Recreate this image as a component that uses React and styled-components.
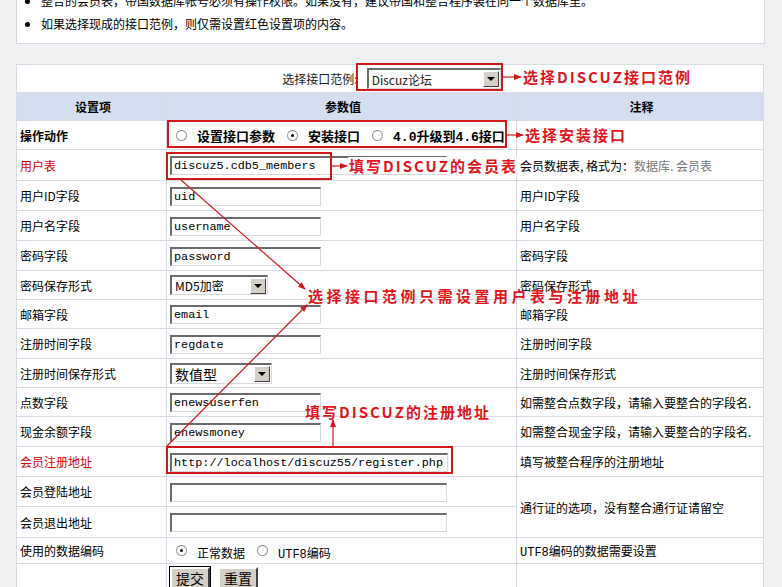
import React from 'react'
import styled, { createGlobalStyle } from 'styled-components'

const GlobalStyle = createGlobalStyle`
  body {
    margin: 0;
    background: #f0f1f3;
    font-family: "Noto Sans CJK SC", "Noto Sans", sans-serif;
    font-size: 12px;
    color: #000;
  }
`

const Page = styled.div`
  position: relative;
  display: flow-root;
  width: 782px;
  height: 587px;
  overflow: hidden;
  padding: 0 19px 0 16px;
  box-sizing: border-box;
`

const TipPanel = styled.div`
  margin-top: -14px;
  background: #fff;
  border: 1px solid #d3d8e3;
  padding: 2px 0 8px 0;
  width: 749px;
  box-sizing: border-box;
`

const TipList = styled.ul`
  margin: 0;
  padding: 0 0 0 24px;
  list-style: disc;
  li {
    line-height: 23px;
    padding-left: 0;
  }
`

const Table = styled.table`
  margin-top: 20px;
  width: 747px;
  border-collapse: collapse;
  background: #fff;
  table-layout: fixed;
  td, th {
    border: 1px solid #d6dbe6;
    padding: 0 0 0 3px;
    vertical-align: middle;
    white-space: nowrap;
  }
`

const Row = styled.tr`
  height: ${p => p.h}px;
`

const ExampleCell = styled.td`
  text-align: center;
  color: #222;
`

const HeadCell = styled.th`
  background: #d4deef;
  font-weight: bold;
  text-align: center;
  font-size: 12px;
`

const LabelCell = styled.td`
  color: ${p => (p.red ? '#d40000' : '#000')};
  font-weight: ${p => (p.bold ? 'bold' : 'normal')};
`

const ValueCell = styled.td`
  padding-left: 3px;
`

const NoteCell = styled.td`
  padding-left: 3px;
`

const Gray = styled.span`
  color: #777;
`

const Field = styled.input`
  width: ${p => p.w}px;
  height: 19px;
  box-sizing: border-box;
  margin: 0;
  padding: 0 1px 0 2px;
  vertical-align: middle;
  font-family: "Liberation Mono", monospace;
  font-size: 11.8px;
  color: #000;
  background: #fff;
  border-top: 2px solid #6c6c6c;
  border-left: 2px solid #6c6c6c;
  border-bottom: 1px solid #d9d9d9;
  border-right: 1px solid #d9d9d9;
  outline: none;
`

const Combo = styled.div`
  display: inline-flex;
  align-items: center;
  justify-content: space-between;
  width: ${p => p.w}px;
  height: ${p => p.h || 20}px;
  box-sizing: border-box;
  vertical-align: middle;
  background: #fff;
  border-top: 2px solid #6c6c6c;
  border-left: 2px solid #6c6c6c;
  border-bottom: 1px solid #d9d9d9;
  border-right: 1px solid #d9d9d9;
  padding-left: 3px;
  font-size: ${p => p.fs || 12}px;
`

const ComboButton = styled.span`
  display: flex;
  align-items: center;
  justify-content: center;
  width: 16px;
  height: 16px;
  margin-right: 1px;
  box-sizing: border-box;
  background: #d4d0c8;
  border-top: 1px solid #fff;
  border-left: 1px solid #fff;
  border-bottom: 1px solid #404040;
  border-right: 1px solid #404040;
`

const Triangle = styled.span`
  width: 0;
  height: 0;
  border-left: 4px solid transparent;
  border-right: 4px solid transparent;
  border-top: 4px solid #000;
`

const ExampleLabel = styled.span`
  vertical-align: middle;
  margin-right: 9px;
`

const RadioGroup = styled.div`
  display: flex;
  align-items: center;
  padding-left: 6px;
  white-space: nowrap;
  font-weight: ${p => (p.bold ? 'bold' : 'normal')};
  font-size: ${p => (p.bold ? 13 : 12)}px;
`

const Radio = styled.input`
  appearance: none;
  width: 11px;
  height: 11px;
  margin: 0 10px 0 0;
  border-radius: 50%;
  border: 1px solid #9a9a9a;
  border-top-color: #7a7a7a;
  background: #fff;
  position: relative;
  flex: none;
  &:checked::after {
    content: '';
    position: absolute;
    left: 3px;
    top: 3px;
    width: 3px;
    height: 3px;
    border-radius: 50%;
    background: #111;
  }
`

const RadioText = styled.span`
  flex: none;
  margin-right: 12px;
  padding-top: ${p => (p.low ? 4 : 0)}px;
`

const Mono = styled.span`
  font-family: "Liberation Mono", monospace;
`

const ClassicButton = styled.button`
  height: 23px;
  margin: 3px 8px 0 0;
  padding: 0 4px;
  font-family: "Noto Sans CJK SC", sans-serif;
  font-size: 14px;
  line-height: 17px;
  background: #d4d0c8;
  color: #000;
  border-top: 2px solid #fff;
  border-left: 2px solid #fff;
  border-bottom: 2px solid #404040;
  border-right: 2px solid #404040;
  outline: ${p => (p.primary ? '1px solid #000' : 'none')};
  vertical-align: top;
`

const Overlay = styled.svg`
  position: absolute;
  left: 0;
  top: 0;
  pointer-events: none;
`

const Note = styled.span`
  position: absolute;
  left: ${p => p.x}px;
  top: ${p => p.y}px;
  color: #e3151b;
  font-weight: bold;
  font-size: 15px;
  line-height: 17px;
  letter-spacing: ${p => p.ls || 2}px;
  white-space: nowrap;
  background: ${p => (p.cover ? '#fff' : 'transparent')};
  padding-left: ${p => (p.cover ? 1 : 0)}px;
`

const fields = [
  { label: '用户ID字段', value: 'uid', note: '用户ID字段' },
  { label: '用户名字段', value: 'username', note: '用户名字段' },
  { label: '密码字段', value: 'password', note: '密码字段' },
]

function Select({ w, text, fs, h }) {
  return (
    <Combo w={w} fs={fs} h={h}>
      <span>{text}</span>
      <ComboButton>
        <Triangle />
      </ComboButton>
    </Combo>
  )
}

function Arrows() {
  const red = '#d3181c'
  return (
    <Overlay width="782" height="587">
      <defs>
        <marker id="head" markerWidth="8" markerHeight="6" refX="7" refY="3" orient="auto" markerUnits="userSpaceOnUse">
          <path d="M0,0 L8,3 L0,6 Z" fill={red} />
        </marker>
      </defs>
      <g fill="none" stroke={red} strokeWidth="2">
        <rect x="357" y="64" width="145" height="26" />
        <rect x="168" y="121" width="338" height="26" />
        <rect x="167" y="153" width="164" height="26" />
        <rect x="167" y="447" width="285" height="26" />
      </g>
      <g stroke={red} strokeWidth="1.2" markerEnd="url(#head)">
        <line x1="503" y1="77" x2="521" y2="77" />
        <line x1="507" y1="135" x2="523" y2="135" />
        <line x1="332" y1="166" x2="347" y2="166" />
        <line x1="181" y1="180" x2="305" y2="289" />
        <line x1="167" y1="446" x2="307" y2="305" />
        <line x1="333" y1="446" x2="333" y2="420" />
      </g>
    </Overlay>
  )
}

export default function App() {
  return (
    <Page>
      <GlobalStyle />
      <TipPanel>
        <TipList>
          <li>整合的会员表，帝国数据库帐号必须有操作权限。如果没有，建议帝国和整合程序装在同一个数据库里。</li>
          <li>如果选择现成的接口范例，则仅需设置红色设置项的内容。</li>
        </TipList>
      </TipPanel>

      <Table>
        <colgroup>
          <col style={{ width: 150 }} />
          <col style={{ width: 350 }} />
          <col style={{ width: 247 }} />
        </colgroup>
        <tbody>
          <Row h={28}>
            <ExampleCell colSpan={3}>
              <ExampleLabel>选择接口范例:</ExampleLabel>
              <Select w={134} h={21} text="Discuz论坛" />
            </ExampleCell>
          </Row>
          <Row h={28}>
            <HeadCell>设置项</HeadCell>
            <HeadCell>参数值</HeadCell>
            <HeadCell>注释</HeadCell>
          </Row>
          <Row h={29}>
            <LabelCell bold>操作动作</LabelCell>
            <ValueCell>
              <RadioGroup bold>
                <Radio type="radio" name="act" />
                <RadioText>设置接口参数</RadioText>
                <Radio type="radio" name="act" defaultChecked />
                <RadioText>安装接口</RadioText>
                <Radio type="radio" name="act" />
                <RadioText><Mono>4.0</Mono>升级到<Mono>4.6</Mono>接口</RadioText>
              </RadioGroup>
            </ValueCell>
            <NoteCell />
          </Row>
          <Row h={31}>
            <LabelCell red>用户表</LabelCell>
            <ValueCell><Field w={277} defaultValue="discuz5.cdb5_members" /></ValueCell>
            <NoteCell>会员数据表, 格式为：<Gray>数据库. 会员表</Gray></NoteCell>
          </Row>
          {fields.map(f => (
            <Row h={30} key={f.label}>
              <LabelCell>{f.label}</LabelCell>
              <ValueCell><Field w={151} defaultValue={f.value} /></ValueCell>
              <NoteCell>{f.note}</NoteCell>
            </Row>
          ))}
          <Row h={29}>
            <LabelCell>密码保存形式</LabelCell>
            <ValueCell><Select w={98} text="MD5加密" /></ValueCell>
            <NoteCell>密码保存形式</NoteCell>
          </Row>
          <Row h={29}>
            <LabelCell>邮箱字段</LabelCell>
            <ValueCell><Field w={151} defaultValue="email" /></ValueCell>
            <NoteCell>邮箱字段</NoteCell>
          </Row>
          <Row h={30}>
            <LabelCell>注册时间字段</LabelCell>
            <ValueCell><Field w={151} defaultValue="regdate" /></ValueCell>
            <NoteCell>注册时间字段</NoteCell>
          </Row>
          <Row h={29}>
            <LabelCell>注册时间保存形式</LabelCell>
            <ValueCell><Select w={102} h={21} fs={14} text="数值型" /></ValueCell>
            <NoteCell>注册时间保存形式</NoteCell>
          </Row>
          <Row h={29}>
            <LabelCell>点数字段</LabelCell>
            <ValueCell><Field w={151} defaultValue="enewsuserfen" /></ValueCell>
            <NoteCell>如需整合点数字段，请输入要整合的字段名.</NoteCell>
          </Row>
          <Row h={30}>
            <LabelCell>现金余额字段</LabelCell>
            <ValueCell><Field w={151} defaultValue="enewsmoney" /></ValueCell>
            <NoteCell>如需整合现金字段，请输入要整合的字段名.</NoteCell>
          </Row>
          <Row h={30}>
            <LabelCell red>会员注册地址</LabelCell>
            <ValueCell><Field w={278} defaultValue="http://localhost/discuz55/register.php" /></ValueCell>
            <NoteCell>填写被整合程序的注册地址</NoteCell>
          </Row>
          <Row h={30}>
            <LabelCell>会员登陆地址</LabelCell>
            <ValueCell><Field w={277} defaultValue="" /></ValueCell>
            <NoteCell rowSpan={2}>通行证的选项，没有整合通行证请留空</NoteCell>
          </Row>
          <Row h={31}>
            <LabelCell>会员退出地址</LabelCell>
            <ValueCell><Field w={277} defaultValue="" /></ValueCell>
          </Row>
          <Row h={26}>
            <LabelCell>使用的数据编码</LabelCell>
            <ValueCell>
              <RadioGroup>
                <Radio type="radio" name="enc" defaultChecked />
                <RadioText low>正常数据</RadioText>
                <Radio type="radio" name="enc" />
                <RadioText low><Mono>UTF8</Mono>编码</RadioText>
              </RadioGroup>
            </ValueCell>
            <NoteCell><Mono>UTF8</Mono>编码的数据需要设置</NoteCell>
          </Row>
          <Row h={40}>
            <LabelCell />
            <ValueCell style={{ verticalAlign: 'top' }}>
              <ClassicButton primary>提交</ClassicButton>
              <ClassicButton>重置</ClassicButton>
            </ValueCell>
            <NoteCell />
          </Row>
        </tbody>
      </Table>

      <Arrows />
      <Note x={523} y={68}>选择DISCUZ接口范例</Note>
      <Note x={525} y={126}>选择安装接口</Note>
      <Note x={348} y={157} cover>填写DISCUZ的会员表</Note>
      <Note x={308} y={287} ls={3.5}>选择接口范例只需设置用户表与注册地址</Note>
      <Note x={305} y={403}>填写DISCUZ的注册地址</Note>
    </Page>
  )
}
